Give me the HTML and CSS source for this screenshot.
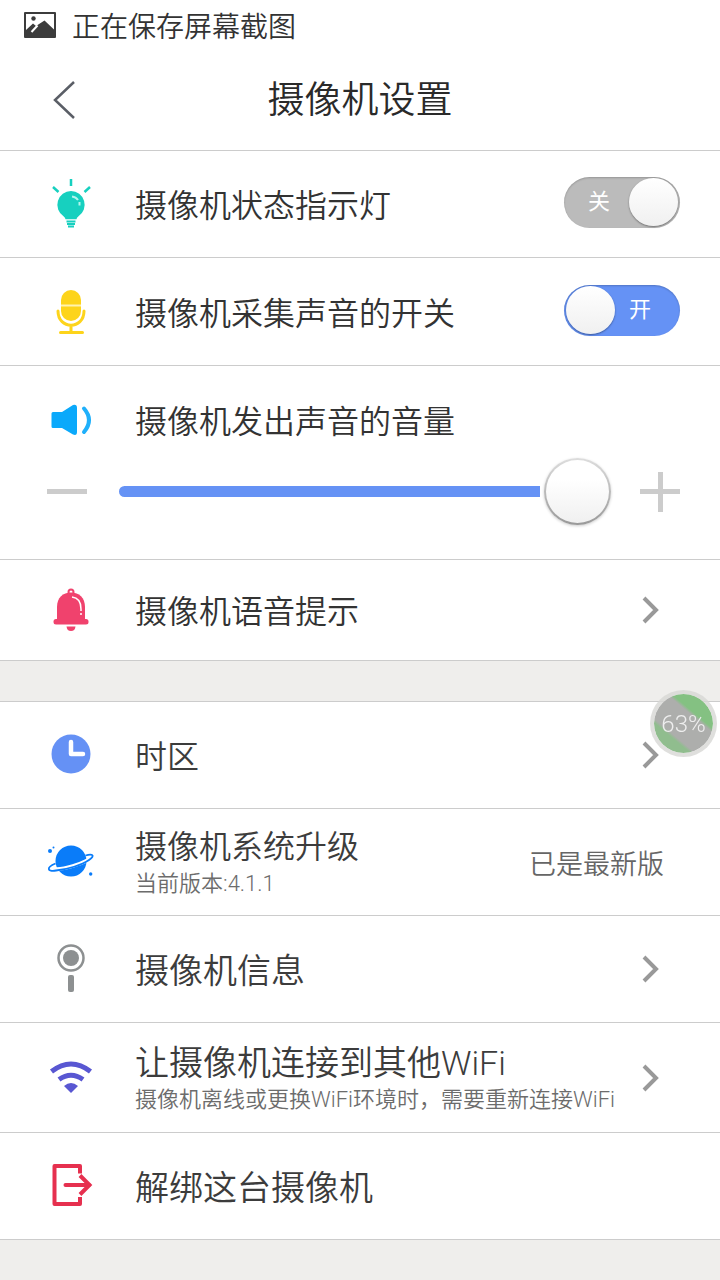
FILE: index.html
```html
<!DOCTYPE html>
<html lang="zh-CN">
<head>
    <meta charset="UTF-8">
    <meta name="viewport" content="width=device-width, initial-scale=1.0">
    <title>摄像机设置</title>
    <link rel="stylesheet" href="styles.css">
</head>
<body>
    <!-- Status bar -->
    <div class="status-bar">
        <svg class="status-icon" viewBox="0 0 32 26">
            <path fill="#3c3c3c" fill-rule="evenodd" d="M1 0H31a1 1 0 0 1 1 1V25a1 1 0 0 1-1 1H1a1 1 0 0 1-1-1V1a1 1 0 0 1 1-1ZM2 2V18L9 11.500L12 14L20.500 8.500L30 17.500V2Z"/>
            <circle cx="9.500" cy="6.500" r="2.200" fill="#3c3c3c"/>
            <path stroke="#fff" stroke-width="2" d="M7.500 20L13.500 13.500"/>
        </svg>
        <span>正在保存屏幕截图</span>
    </div>

    <header class="header">
        <button type="button" class="back" aria-label="返回">
            <svg width="24" height="40" viewBox="0 0 24 40"><path d="M22 2L3 20L22 38" fill="none" stroke="#5a5e66" stroke-width="2.500"/></svg>
        </button>
        <h1>摄像机设置</h1>
    </header>

    <main>
        <!-- Camera light and sound -->
        <section class="group">
            <div class="row">
                <svg class="icon" viewBox="0 0 48 48" fill="none" stroke="#17d0bf">
                    <path stroke-width="2.500" d="M24 -1V6M6 7L11.500 12M43 7L37.500 12"/>
                    <path fill="#17d0bf" stroke="none" d="M24 11A13.800 13.800 0 0 1 31.500 36.300C30.300 37.200 30 38 29.500 39.300H18.500C18 38 17.700 37.200 16.500 36.300A13.800 13.800 0 0 1 24 11Z"/>
                    <path stroke="#b5f5ee" stroke-width="2" d="M25 16.500Q29 17 31 20M32.500 22V25.500"/>
                    <path stroke-width="2" d="M19.500 41.500H28.500M20 44H28M21 46.500H27"/>
                </svg>
                <label class="text" for="light">摄像机状态指示灯</label>
                <div class="toggle">
                    <input type="checkbox" id="light">
                    <span class="off">关</span>
                    <span class="on">开</span>
                </div>
            </div>
            <div class="row medium">
                <svg class="icon" viewBox="0 0 48 48" fill="none" stroke="#fdd41b">
                    <rect x="14" y="2" width="20" height="31" rx="10" fill="#fdd41b" stroke="none"/>
                    <path stroke="#fff3b0" stroke-width="2" d="M14 17.500H34"/>
                    <path stroke-width="3" stroke-linecap="round" d="M11 23C11 42 37 42 37 23M24 38V44M13.500 44.500H35.500"/>
                </svg>
                <label class="text" for="mic">摄像机采集声音的开关</label>
                <div class="toggle">
                    <input type="checkbox" id="mic" checked>
                    <span class="off">关</span>
                    <span class="on">开</span>
                </div>
            </div>
            <div class="volume">
                <div class="volume-title">
                    <svg class="icon" viewBox="0 0 48 48">
                        <path fill="#0aa9fb" d="M6 16H15L26 9Q30 8 30 12V36Q30 40 26 38.500L15 32H6Q4.500 32 4.500 30.500V17.500Q4.500 16 6 16Z"/>
                        <path fill="none" stroke="#1fb0fb" stroke-width="4" stroke-linecap="round" d="M37 12.500Q47 24 37 36"/>
                    </svg>
                    <label class="text" for="volume">摄像机发出声音的音量</label>
                </div>
                <div class="slider">
                    <button type="button" id="minus" class="step" aria-label="减小音量"></button>
                    <input type="range" id="volume" min="0" max="100" value="100">
                    <button type="button" id="plus" class="step plus" aria-label="增大音量"></button>
                </div>
            </div>
            <a class="row short" href="#voice">
                <svg class="icon" viewBox="0 0 48 48" fill="#f0426d">
                    <circle cx="24" cy="6" r="2.500" fill="none" stroke="#f0426d" stroke-width="2"/>
                    <path d="M10 35V21C10 11.500 16 6.500 24 6.500S38 11.500 38 21V35Z"/>
                    <rect x="6.500" y="33" width="35" height="5.500" rx="2.500"/>
                    <path d="M19.500 40.500H28.500Q28 45 24 45T19.500 40.500Z"/>
                    <path fill="none" stroke="#fff" stroke-width="1.500" d="M25 11Q34 12 34 23V25M34 27V29"/>
                </svg>
                <span class="text">摄像机语音提示</span>
                <svg class="chevron" viewBox="0 0 18 28"><path d="M2 2L14 14L2 26"/></svg>
            </a>
        </section>

        <!-- System -->
        <section class="group">
            <a class="row" href="#timezone">
                <svg class="icon" viewBox="0 0 48 48">
                    <circle cx="24" cy="23" r="19.500" fill="#6591f5"/>
                    <path fill="none" stroke="#fff" stroke-width="4.500" stroke-linecap="round" stroke-linejoin="round" d="M24 11V23H36"/>
                </svg>
                <span class="text">时区</span>
                <svg class="chevron" viewBox="0 0 18 28"><path d="M2 2L14 14L2 26"/></svg>
            </a>
            <div class="row">
                <svg class="icon" viewBox="0 0 48 48" fill="#0a7cf9">
                    <circle cx="24" cy="23" r="15.500"/>
                    <path fill="none" stroke="#fff" stroke-width="3.500" d="M3 29C10 35 43 24 45 18"/>
                    <path fill="none" stroke="#0a7cf9" stroke-width="1.800" stroke-linejoin="round" d="M8.500 25.500C-1 29.500 0 34 9 32.500C20 31.500 35 27 42 22C49 17 45 15.500 38.500 17.500"/>
                    <circle cx="3" cy="13" r="2"/>
                    <circle cx="6.500" cy="9.500" r="1"/>
                    <circle cx="43.700" cy="36" r="1.700"/>
                </svg>
                <div class="text">
                    摄像机系统升级
                    <small>当前版本<span class="latin">:4.1.1</span></small>
                </div>
                <span class="value">已是最新版</span>
            </div>
            <a class="row large" href="#info">
                <svg class="icon" viewBox="0 0 48 48">
                    <circle cx="24" cy="13" r="12.500" fill="none" stroke="#8d9091" stroke-width="2.500"/>
                    <circle cx="24" cy="13" r="8" fill="#8d9091"/>
                    <rect x="21" y="30" width="6" height="17" rx="2" fill="#8d9091"/>
                </svg>
                <span class="text">摄像机信息</span>
                <svg class="chevron" viewBox="0 0 18 28"><path d="M2 2L14 14L2 26"/></svg>
            </a>
            <a class="row large tall" href="#wifi">
                <svg class="icon" viewBox="0 0 48 48" fill="none" stroke="#5957d2" stroke-width="5">
                    <path d="M4.500 17.500Q24 2.500 43.500 17.500M12 25.500Q24 17 36 25.500"/>
                    <path fill="#5957d2" stroke="none" d="M17 32Q24 26 31 32L24 39Z"/>
                </svg>
                <span class="text">
                    让摄像机连接到其他<span class="latin">WiFi</span>
                    <small>摄像机离线或更换<span class="latin">WiFi</span>环境时，需要重新连接<span class="latin">WiFi</span></small>
                </span>
                <svg class="chevron" viewBox="0 0 18 28"><path d="M2 2L14 14L2 26"/></svg>
            </a>
            <a class="row large" href="#unbind">
                <svg class="icon" viewBox="0 0 48 48" fill="none" stroke="#e6304f" stroke-width="4">
                    <path stroke-linejoin="round" d="M33 11.500V4H7.500V42H33V35"/>
                    <path stroke-linecap="round" d="M18.500 23H42"/>
                    <path stroke-width="4" d="M33 13.500L42.500 23L33 32.500"/>
                </svg>
                <span class="text">解绑这台摄像机</span>
            </a>
        </section>
    </main>

    <button type="button" class="ball latin">63%</button>

    <script>
        const volume = document.getElementById('volume');

        document.getElementById('minus').addEventListener('click', () => {
            volume.stepDown(10);
            updateTrack();
        });
        document.getElementById('plus').addEventListener('click', () => {
            volume.stepUp(10);
            updateTrack();
        });
        volume.addEventListener('input', updateTrack);

        // keep the blue part just left of the thumb
        function updateTrack() {
            volume.style.setProperty('--level', volume.value / 100);
        }
    </script>
</body>
</html>
```

FILE: styles.css
```css
* {
    box-sizing: border-box;
}

body {
    margin: 0;
    font-family: Roboto, "Noto Sans CJK SC", sans-serif;
    font-weight: 350;
    color: #333;
    background-color: #efeeec;
}

button {
    padding: 0;
    border: none;
    background: none;
    font-family: inherit;
    font-weight: inherit;
    cursor: pointer;
}

.latin {
    font-weight: 300;
}

.status-bar {
    display: flex;
    align-items: center;
    gap: 16px;
    height: 50px;
    padding-left: 24px;
    font-size: 28px;
    background-color: #fff;
}

.status-icon {
    width: 32px;
    height: 26px;
}

.header {
    display: grid;
    grid-template-columns: 80px 1fr 80px;
    align-items: center;
    height: 101px;
    border-bottom: 1px solid #ccc;
    background-color: #fff;
}

.header h1 {
    margin: 0;
    padding-bottom: 6px;
    font-size: 37px;
    font-weight: inherit;
    text-align: center;
    color: #2a2a2a;
}

.back {
    display: flex;
    justify-content: flex-end;
    padding-right: 4px;
}

.group {
    background-color: #fff;
}

.group + .group {
    margin-top: 40px;
    border-top: 1px solid #ccc;
    color: #3c3c3c;
}

.row {
    display: flex;
    align-items: center;
    min-height: 107px;
    padding: 0 40px 0 47px;
    border-bottom: 1px solid #ccc;
    color: inherit;
    text-decoration: none;
}

.row.short {
    min-height: 101px;
}

.row.medium {
    min-height: 108px;
}

.row.tall {
    min-height: 110px;
}

.icon {
    flex: none;
    width: 48px;
    height: 48px;
    margin-right: 40px;
    overflow: visible;
}

.text {
    flex: 1;
    padding-top: 4px;
    font-size: 32px;
    line-height: 40px;
    white-space: nowrap;
}

.large .text {
    font-size: 34px;
}

.text small {
    display: block;
    font-size: 22px;
    line-height: 34px;
    color: #6c6c6c;
}

.value {
    padding-right: 16px;
    font-size: 27px;
    color: #666;
}

.chevron {
    flex: none;
    width: 18px;
    height: 28px;
    margin-right: 20px;
    fill: none;
    stroke: #999;
    stroke-width: 4px;
}

/* On/off switch */
.toggle {
    position: relative;
    width: 116px;
    height: 51px;
    margin-bottom: 3px;
}

.toggle input {
    appearance: none;
    display: flex;
    justify-content: flex-end;
    width: 100%;
    height: 100%;
    margin: 0;
    padding: 1px 2px;
    border-radius: 26px;
    background-color: #bbb;
    box-shadow: inset 0 1px 2px rgba(0, 0, 0, 0.2);
    cursor: pointer;
}

.toggle input::before {
    content: "";
    width: 49px;
    height: 48px;
    border-radius: 50%;
    background: linear-gradient(#fff, #f0f0f0);
    box-shadow: 0 1px 2px rgba(0, 0, 0, 0.4);
}

.toggle input:checked {
    justify-content: flex-start;
    background-color: #6592f5;
}

.toggle span {
    position: absolute;
    top: 0;
    left: 24px;
    font-size: 22px;
    font-weight: 400;
    line-height: 50px;
    color: #fff;
    pointer-events: none;
}

.toggle .on {
    display: none;
    left: auto;
    right: 29px;
}

.toggle input:checked ~ .on {
    display: block;
}

.toggle input:checked ~ .off {
    display: none;
}

/* Volume */
.volume {
    padding: 30px 40px 34px 47px;
    border-bottom: 1px solid #ccc;
}

.volume-title {
    display: flex;
    align-items: center;
}

.slider {
    display: flex;
    align-items: center;
    margin-top: 14px;
}

.step {
    flex: none;
    width: 40px;
    height: 40px;
    background: linear-gradient(#ccc, #ccc) center / 40px 5px no-repeat;
}

.step.plus {
    background: linear-gradient(#ccc, #ccc) center / 40px 5px no-repeat,
        linear-gradient(#ccc, #ccc) center / 5px 40px no-repeat;
}

.slider input {
    --level: 1;
    appearance: none;
    flex: 1;
    min-width: 0;
    height: 67px;
    margin: 0 29px 0 32px;
    background: none;
}

.slider input::-webkit-slider-runnable-track {
    height: 11px;
    border-radius: 6px;
    background: linear-gradient(#6592f5, #6592f5) left / calc((100% - 67px) * var(--level) - 4px) 100% no-repeat;
}

.slider input::-webkit-slider-thumb {
    appearance: none;
    width: 67px;
    height: 67px;
    margin-top: -28px;
    border: 2px solid transparent;
    border-radius: 50%;
    background: linear-gradient(#fff 30%, #f0f0f0) padding-box, linear-gradient(#ddd, #999) border-box;
    box-shadow: 0 1px 3px rgba(0, 0, 0, 0.2);
}

/* Floating memory ball */
.ball {
    position: fixed;
    top: 690px;
    right: 3px;
    width: 67px;
    height: 67px;
    border: 4px solid rgba(215, 215, 212, 0.8);
    border-radius: 50%;
    background: linear-gradient(40deg, #90bd8e 28%, #adaeac 32%, #adaeac 64%, #84c182 68%) padding-box;
    font-size: 24px;
    color: #eee;
}
```
